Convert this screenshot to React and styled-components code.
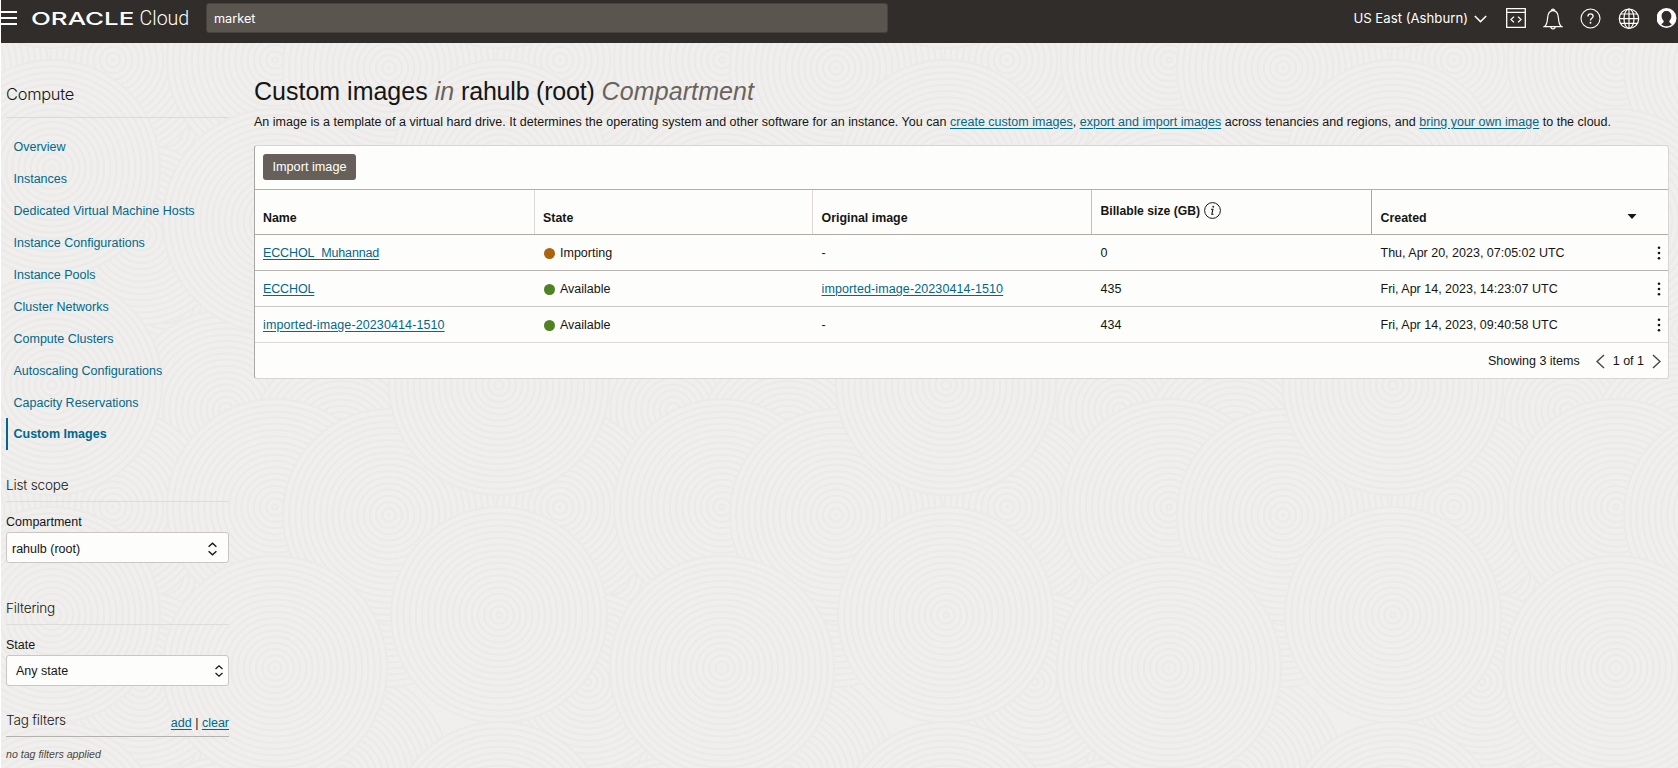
import React from "react";
import styled, { createGlobalStyle } from "styled-components";

const sans = '"Liberation Sans", Arial, sans-serif';

const GlobalStyle = createGlobalStyle`
  *, *::before, *::after { box-sizing: border-box; }
  body {
    margin: 0;
    background: #f0efed;
    color: #161513;
    font: 12.5px/16px ${sans};
    overflow: hidden;
  }
`;

const Page = styled.div`
  position: relative;
  z-index: 0;
  height: 768px;
  border-left: 1px solid #fff;
  display: flex;
  flex-direction: column;
  overflow: hidden;
`;

const Backdrop = styled.svg`
  position: absolute;
  inset: 0;
  z-index: -1;
  width: 100%;
  height: 100%;
`;

const TopBar = styled.header`
  flex: none;
  height: 43px;
  background: #312d2a;
  color: #fff;
  display: flex;
  align-items: flex-start;
  padding-top: 3px;
`;

const Burger = styled.div`
  width: 16px;
  height: 14px;
  margin-top: 8px;
  display: flex;
  flex-direction: column;
  justify-content: space-between;
  span { height: 2px; background: #fff; }
`;

const Brand = styled.div`
  width: 174px;
  margin-left: 15px;
  padding-top: 3px;
  display: flex;
  line-height: 24px;
  white-space: nowrap;
`;

const BrandMark = styled.span`
  width: 107.5px;
  margin-left: -1px;
  padding-top: 1px;
  font: 500 17.5px/24px Inter, sans-serif;
  transform: scaleX(1.48);
  transform-origin: 0 50%;
  flex: none;
`;

const BrandName = styled.span`
  font: 300 19.6px/24px Roboto, sans-serif;
  padding-top: 1px;
  margin-left: 1px;
`;

const Search = styled.div`
  width: 682px;
  height: 30px;
  padding: 0 7px;
  border: 1px solid #47423d;
  border-radius: 3px;
  background: #5b554f;
  font: 400 12.7px/30px Inter, sans-serif;
`;

const Region = styled.div`
  display: flex;
  align-items: center;
  gap: 6px;
  height: 31px;
  margin-left: auto;
  font: 400 13.2px/31px Inter, sans-serif;
`;

const Tools = styled.div`
  display: flex;
  align-items: flex-start;
  margin: 5px 0 0 19px;
  gap: 17px;
  width: 172px;
  svg { flex: none; display: block; }
`;

const Columns = styled.div`
  display: flex;
  align-items: flex-start;
`;

const Sidebar = styled.aside`
  width: 223px;
  margin-left: 5px;
  flex: none;
`;

const SideTitle = styled.h2`
  margin: 0;
  height: 75px;
  padding-top: 41px;
  border-bottom: 1px solid #dcdad8;
  font: 300 16.4px/20px Inter, sans-serif;
  letter-spacing: -0.25px;
  color: #161513;
`;

const Nav = styled.nav`
  margin-top: 13px;
  display: flex;
  flex-direction: column;
`;

const NavItem = styled.a`
  height: 31.95px;
  padding-left: 5.5px;
  border-left: 2px solid ${(p) => (p.$active ? "#00688c" : "transparent")};
  color: #00688c;
  line-height: 32px;
  font-weight: ${(p) => (p.$active ? 700 : 400)};
`;

const Section = styled.section`
  margin-top: ${(p) => p.$gap}px;
`;

const SectionHead = styled.div`
  display: flex;
  justify-content: space-between;
  align-items: flex-end;
  height: 27px;
  padding-bottom: ${(p) => (p.$strong ? 5 : 7)}px;
  border-bottom: 1px solid ${(p) => (p.$strong ? "#b5b1ad" : "#dedcda")};
`;

const SectionTitle = styled.h3`
  margin: 0;
  font: 300 13.6px/18px Inter, sans-serif;
  letter-spacing: -0.2px;
  color: #161513;
  padding-bottom: ${(p) => p.$lift || 0}px;
`;

const Label = styled.label`
  display: block;
  margin-top: 12px;
  height: 18px;
  line-height: 16px;
`;

const Select = styled.div`
  display: flex;
  justify-content: space-between;
  align-items: center;
  height: 31px;
  padding: ${(p) => p.$pad};
  background: #fdfdfb;
  border: 1px solid #cbc6c2;
  border-radius: 3px;
`;

const Link = styled.a`
  color: #00688c;
  text-decoration: underline;
  text-underline-offset: 1.5px;
  letter-spacing: ${(p) => (p.$track ? `${p.$track}px` : "inherit")};
`;

const Note = styled.p`
  margin: 9px 0 0;
  font-size: 10.6px;
  font-style: italic;
  color: #4b4642;
`;

const Main = styled.main`
  width: 1415px;
  margin-left: 25px;
  flex: none;
`;

const Title = styled.h1`
  margin: 0;
  padding-top: 32px;
  font-size: 25px;
  line-height: 32px;
  font-weight: 400;
  em { color: #6a625c; }
  em:last-child { letter-spacing: 0.1px; }
  span { letter-spacing: -0.2px; }
`;

const Intro = styled.p`
  margin: 7px 0 15px;
  white-space: nowrap;
  letter-spacing: 0.02px;
`;

const Card = styled.div`
  background: #fdfdfb;
  border: 1px solid #d8d5d2;
  border-left-color: #aaa6a2;
  border-radius: 3px;
`;

const Toolbar = styled.div`
  height: 43px;
  padding: 8px;
`;

const Button = styled.button`
  width: 93px;
  height: 26px;
  padding: 0;
  border: 0;
  border-radius: 3px;
  background: #665f5a;
  color: #fff;
  font: 12.7px/27px ${sans};
  display: block;
`;

const Row = styled.div`
  display: grid;
  grid-template-columns: 279.5px 278.5px 279px 280px 1fr;
  height: ${(p) => (p.$head ? 45 : 36)}px;
  border-top: 1px solid ${(p) => p.$line};
`;

const HeadCell = styled.div`
  display: flex;
  justify-content: space-between;
  align-items: flex-end;
  padding: 0 31px 8px 8px;
  border-right: 1px solid ${(p) => p.$rule || "transparent"};
  font-weight: 700;
  font-size: 12.4px;
  & + & { padding-left: 8.5px; }
  &:last-child { border-right: 0; }
`;

const InfoLabel = styled.span`
  display: flex;
  align-items: center;
  gap: 4px;
  padding-bottom: 7px;
  font-size: 12.2px;
`;

const Cell = styled.div`
  display: flex;
  align-items: center;
  padding: 1px 6px 0 8px;
  & + & { padding-left: 8.5px; }
  svg { margin: -1px 0 0 auto; }
`;

const Dot = styled.i`
  width: 11px;
  height: 11px;
  margin: 0 5px 0 1px;
  border-radius: 50%;
  background: ${(p) => p.$color};
`;

const Footer = styled.div`
  display: flex;
  align-items: center;
  justify-content: flex-end;
  height: 36px;
  padding: 1px 7px 0 0;
  border-top: 1px solid #dcd9d6;
  gap: 8px;
  span:first-child { margin-right: 8px; }
`;

const DISCS = [
  [165, 20, 100], [165, 130, 110], [165, 300, 110], [340, 330, 110], [225, 410, 100],
  [112, 60, 100], [388, 150, 90], [340, 440, 90], [140, 235, 90],
  [274, 60, 108], [388, 68, 106], [274, 221, 112], [51, 168, 108], [51, 385, 110],
];

function Swirls() {
  const wrap = [-447, 0, 447];
  return (
    <Backdrop aria-hidden="true">
      <defs>
        <pattern id="swirls" width="447" height="447" patternUnits="userSpaceOnUse">
          {DISCS.flatMap(([x, y, r], n) =>
            wrap.flatMap((dx) =>
              wrap.map((dy) => (
                <g key={`${n}:${dx}:${dy}`} transform={`translate(${x + dx} ${y + dy})`} fill="none" stroke="#ebeae8" strokeWidth="2">
                  <circle r={r} fill="#f0efed" />
                  {Array.from({ length: Math.floor(r / 6.2) }, (_, i) => (
                    <circle key={i} r={r - (i + 1) * 6.2} />
                  ))}
                </g>
              ))
            )
          )}
        </pattern>
      </defs>
      <rect width="100%" height="100%" fill="url(#swirls)" />
    </Backdrop>
  );
}

const line = { fill: "none", stroke: "currentColor", strokeLinecap: "butt" };

const ChevronDown = () => (
  <svg width="13" height="8" viewBox="0 0 13 8" {...line} strokeWidth="1.5"><path d="M.8 1 6.5 6.6 12.2 1" /></svg>
);
const CodeIcon = () => (
  <svg width="20" height="20" viewBox="0 0 20 20" {...line} strokeWidth="1.3"><path d="M.7.7h18.6v18.6H.7zM.7 4.4h18.6M8 8.6 5 11.5l3 2.9M12 8.6l3 2.9-3 2.9" /></svg>
);
const BellIcon = () => (
  <svg width="20" height="22" viewBox="0 0 20 22" {...line} strokeWidth="1.2"><path d="M1.500 18.600c2.300-1.500 2.800-4.500 3.100-8.700C4.900 5.300 6.700 2.700 10 2.700s5.100 2.600 5.400 7.200c.3 4.200.8 7.200 3.100 8.700zM8.500 2.600a1.500 1.500 0 0 1 3 0M7.900 18.800a2.100 2.100 0 0 0 4.200 0" /></svg>
);
const HelpIcon = () => (
  <svg width="21" height="22" viewBox="0 0 21 22" {...line} strokeWidth="1.1"><circle cx="10.500" cy="10.500" r="9.500" /><path d="M7.900 8.600c0-1.700 1.100-2.700 2.600-2.700s2.600 1 2.600 2.400c0 2-2.600 2.100-2.600 4.200" strokeWidth="1.300" /><circle cx="10.500" cy="14.700" r=".4" /></svg>
);
const GlobeIcon = () => (
  <svg width="22" height="22" viewBox="0 0 22 22" {...line} strokeWidth="1.2"><circle cx="11" cy="10.700" r="9.700" /><ellipse cx="11" cy="10.700" rx="5" ry="9.700" /><path d="M11 1v19.400M1.300 10.700h19.400M2.700 6h16.600M2.700 15.400h16.600" /></svg>
);
const UserIcon = () => (
  <svg width="20" height="22" viewBox="0 0 20 22"><circle cx="9.500" cy="10" r="10" fill="#fff" /><path d="M9.500 3.100c-3 0-4.900 2.100-4.900 5 0 2.100.8 3.900 2.200 4.900-.1 1.800-1.300 2.200-2.600 3.200C5.700 17.500 7.400 18.300 9.500 18.300s3.800-.8 5.300-2.100c-1.300-1-2.500-1.400-2.600-3.200 1.400-1 2.200-2.800 2.200-4.900 0-2.900-1.900-5-4.900-5z" fill="#312d2a" /></svg>
);
const UpDown = ({ w = 9 }) => (
  <svg width={w} height="14" viewBox="0 0 9 14" {...line} strokeWidth="1.4"><path d="M.6 4.700 4.500 1.200l3.900 3.500M.6 9.300l3.900 3.500 3.900-3.500" /></svg>
);
const InfoIcon = () => (
  <svg width="17" height="17" viewBox="0 0 17 17" {...line} strokeWidth="1"><circle cx="8.500" cy="8.500" r="7.900" /><path d="M7 7.300h1.900L7.800 12.300h1.700" strokeWidth="1.100" /><circle cx="9.200" cy="4.800" r=".5" fill="currentColor" /></svg>
);
const SortIcon = () => (
  <svg width="10" height="13" viewBox="0 0 10 13"><path d="M.5 1h9L5 6z" fill="#161513" /></svg>
);
const KebabIcon = () => (
  <svg width="6" height="14" viewBox="0 0 6 14" fill="#161513"><circle cx="3" cy="1.700" r="1.300" /><circle cx="3" cy="7" r="1.300" /><circle cx="3" cy="12.300" r="1.300" /></svg>
);
const PageArrow = ({ next }) => (
  <svg width="9" height="15" viewBox="0 0 9 15" {...line} stroke="#4b4642" strokeWidth="1.400"><path d={next ? "M1 1l7 6.500L1 14" : "M8 1 1 7.500 8 14"} /></svg>
);

const NAV = [
  "Overview", "Instances", "Dedicated Virtual Machine Hosts", "Instance Configurations", "Instance Pools",
  "Cluster Networks", "Compute Clusters", "Autoscaling Configurations", "Capacity Reservations", "Custom Images",
];

const IMAGES = [
  { name: "ECCHOL_Muhannad", track: -0.13, state: "Importing", color: "#ac630c", size: 0, created: "Thu, Apr 20, 2023, 07:05:02 UTC" },
  { name: "ECCHOL", track: -0.13, state: "Available", color: "#508223", original: "imported-image-20230414-1510", size: 435, created: "Fri, Apr 14, 2023, 14:23:07 UTC" },
  { name: "imported-image-20230414-1510", track: 0.11, state: "Available", color: "#508223", size: 434, created: "Fri, Apr 14, 2023, 09:40:58 UTC" },
];

export default function App() {
  return (
    <Page>
      <GlobalStyle />
      <Swirls />
      <TopBar>
        <Burger><span /><span /><span /></Burger>
        <Brand><BrandMark>ORACLE</BrandMark><BrandName>Cloud</BrandName></Brand>
        <Search>market</Search>
        <Region>US East (Ashburn)<ChevronDown /></Region>
        <Tools><CodeIcon /><BellIcon /><HelpIcon /><GlobeIcon /><UserIcon /></Tools>
      </TopBar>
      <Columns>
        <Sidebar>
          <SideTitle>Compute</SideTitle>
          <Nav>
            {NAV.map((n) => <NavItem key={n} $active={n === "Custom Images"}>{n}</NavItem>)}
          </Nav>
          <Section $gap={25}>
            <SectionHead><SectionTitle>List scope</SectionTitle></SectionHead>
            <Label>Compartment</Label>
            <Select $pad="3px 11px 0 5px">rahulb (root)<UpDown /></Select>
          </Section>
          <Section $gap={35}>
            <SectionHead><SectionTitle>Filtering</SectionTitle></SectionHead>
            <Label>State</Label>
            <Select $pad="0 5px 0 9px">Any state<UpDown w={8} /></Select>
          </Section>
          <Section $gap={24}>
            <SectionHead $strong>
              <SectionTitle $lift={2}>Tag filters</SectionTitle>
              <span><Link>add</Link> | <Link>clear</Link></span>
            </SectionHead>
            <Note>no tag filters applied</Note>
          </Section>
        </Sidebar>
        <Main>
          <Title>Custom images <em>in</em> <span>rahulb (root)</span> <em>Compartment</em></Title>
          <Intro>
            An image is a template of a virtual hard drive. It determines the operating system and other software for an instance. You can{" "}
            <Link>create custom images</Link>, <Link>export and import images</Link> across tenancies and regions, and{" "}
            <Link>bring your own image</Link> to the cloud.
          </Intro>
          <Card>
            <Toolbar><Button>Import image</Button></Toolbar>
            <Row $head $line="#b3afab">
              <HeadCell $rule="#dcd9d6">Name</HeadCell>
              <HeadCell $rule="#dcd9d6">State</HeadCell>
              <HeadCell $rule="#c4c0bc">Original image</HeadCell>
              <HeadCell $rule="#aaa6a2"><InfoLabel>Billable size (GB)<InfoIcon /></InfoLabel></HeadCell>
              <HeadCell>Created<SortIcon /></HeadCell>
            </Row>
            {IMAGES.map((r, i) => (
              <Row key={r.name} $line={["#b3aca6", "#b8b4b0", "#cbc8c5"][i]}>
                <Cell><Link $track={r.track}>{r.name}</Link></Cell>
                <Cell><Dot $color={r.color} />{r.state}</Cell>
                <Cell>{r.original ? <Link $track={0.11}>{r.original}</Link> : "-"}</Cell>
                <Cell>{r.size}</Cell>
                <Cell>{r.created}<KebabIcon /></Cell>
              </Row>
            ))}
            <Footer><span>Showing 3 items</span><PageArrow /><span>1 of 1</span><PageArrow next /></Footer>
          </Card>
        </Main>
      </Columns>
    </Page>
  );
}
